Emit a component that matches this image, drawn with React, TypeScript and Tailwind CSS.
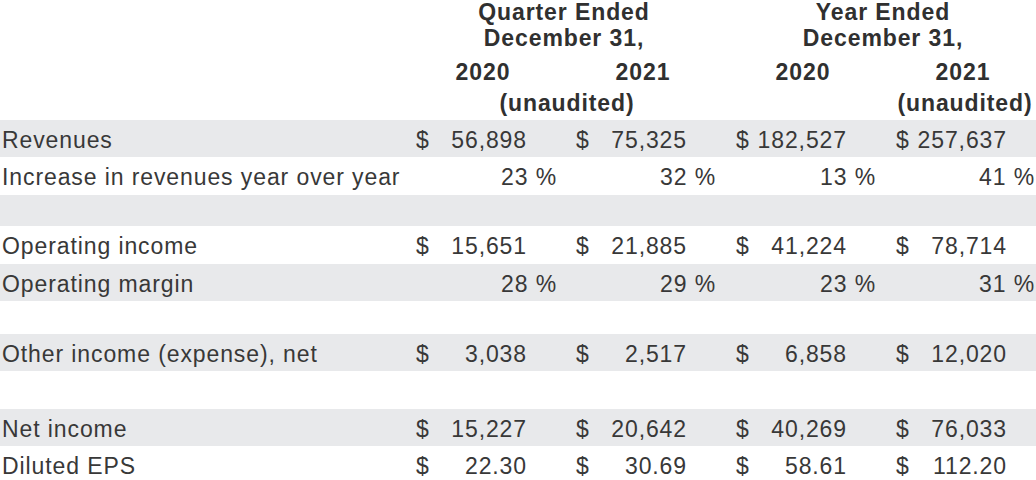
import React from "react"

type Row =
  | { blank: true; gray: boolean; h: string }
  | { blank?: false; label: string; vals: string[]; pct?: boolean; gray: boolean; h: string }

const rows: Row[] = [
  { label: "Revenues", vals: ["56,898", "75,325", "182,527", "257,637"], gray: true, h: "h-[37px]" },
  { label: "Increase in revenues year over year", vals: ["23", "32", "13", "41"], pct: true, gray: false, h: "h-[38px]" },
  { blank: true, gray: true, h: "h-[31px]" },
  { label: "Operating income", vals: ["15,651", "21,885", "41,224", "78,714"], gray: false, h: "h-[38px]" },
  { label: "Operating margin", vals: ["28", "29", "23", "31"], pct: true, gray: true, h: "h-[37px]" },
  { blank: true, gray: false, h: "h-[33px]" },
  { label: "Other income (expense), net", vals: ["3,038", "2,517", "6,858", "12,020"], gray: true, h: "h-[37px]" },
  { blank: true, gray: false, h: "h-[38px]" },
  { label: "Net income", vals: ["15,227", "20,642", "40,269", "76,033"], gray: true, h: "h-[37px]" },
  { label: "Diluted EPS", vals: ["22.30", "30.69", "58.61", "112.20"], gray: false, h: "h-[34px]" },
]

const cols = "grid grid-cols-[415px_160px_160px_160px_141px]"
const pctWidth = ["w-[142px]", "w-[141px]", "w-[141px]", "w-[140px]"]

function Header() {
  return (
    <div className="h-[120px] font-bold text-[#303030]">
      {/* period titles */}
      <div className={cols + " leading-[25.5px]"}>
        <div />
        <div className="col-span-2">
          <div className="w-[298px] text-center">
            <div>Quarter Ended</div>
            <div>December 31,</div>
          </div>
        </div>
        <div className="col-span-2">
          <div className="w-[296px] text-center">
            <div>Year Ended</div>
            <div>December 31,</div>
          </div>
        </div>
      </div>

      {/* years */}
      <div className={cols + " mt-[8.5px] leading-[25.5px]"}>
        <div />
        {["2020", "2021", "2020", "2021"].map((y, i) => (
          <div key={i}>
            <div className="w-[136px] text-center">{y}</div>
          </div>
        ))}
      </div>

      <div className={cols + " mt-[6px] leading-[25.5px]"}>
        <div />
        <div className="col-span-2">
          <div className="w-[304px] text-center">(unaudited)</div>
        </div>
        <div />
        <div>
          <div className="w-[140px] text-center">(unaudited)</div>
        </div>
      </div>
    </div>
  )
}

export default function App() {
  return (
    <div
      className="w-[1036px] h-[480px] overflow-hidden bg-white text-[23px] tracking-[0.9px] text-[#383838]"
      style={{ fontFamily: '"Liberation Sans", Arial, sans-serif' }}
    >
      <Header />

      {rows.map((r, i) => (
        <div key={i} className={cols + " " + r.h + " " + (r.gray ? "bg-[#e8e9eb]" : "bg-white")}>
          {r.blank ? null : (
            <>
              <div className="pl-[2px] pt-[8px] leading-[25px] whitespace-nowrap">{r.label}</div>
              {r.vals.map((v, j) =>
                r.pct ? (
                  <div key={j} className="pt-[8px] leading-[25px] whitespace-nowrap">
                    <div className={pctWidth[j] + " text-right"}>{v} %</div>
                  </div>
                ) : (
                  <div key={j} className="flex pt-[8px] leading-[25px] whitespace-nowrap">
                    <span className="w-[20px] pl-[1px]">$</span>
                    <span className="w-[92px] text-right">{v}</span>
                  </div>
                )
              )}
            </>
          )}
        </div>
      ))}
    </div>
  )
}
